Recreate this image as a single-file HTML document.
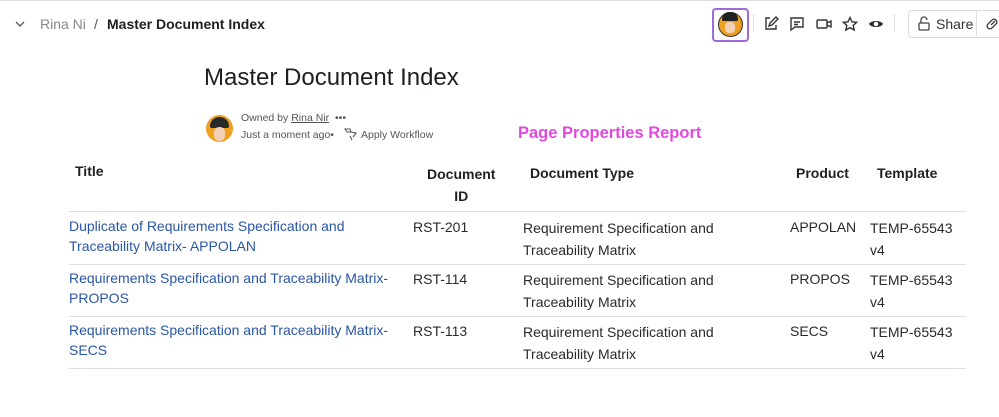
<!DOCTYPE html>
<html><head><meta charset="utf-8"><style>
body{margin:0;width:999px;height:417px;background:#fff;position:relative;overflow:hidden;font-family:"Liberation Sans",sans-serif;color:#292a2e}
.a{position:absolute;white-space:nowrap}
.t{font-size:14px;line-height:20px}
.b{font-weight:bold;color:#1d1f22}
.l{color:#2a56a6}
.hr{position:absolute;left:69px;width:897px;height:1px;background:#dcdfe4}
.ic{position:absolute;top:16px}
</style></head><body>
<div style="position:absolute;left:0;top:0;width:999px;height:1px;background:#ddd"></div>
<svg class="a" style="left:14px;top:19px" width="12" height="10"><path d="M2 3l4 4 4-4" stroke="#555" stroke-width="1.3" fill="none"/></svg>
<div class="a t" style="left:40px;top:14px;color:#888">Rina Ni</div>
<div class="a t" style="left:94px;top:14px;color:#555">/</div>
<div class="a t b" style="left:107px;top:14px;font-size:14px">Master Document Index</div>

<div class="a" style="left:712px;top:8px;width:33px;height:30px;border:2px solid #9f6bdb;border-radius:4px"></div>
<div class="a" style="left:718px;top:12px;width:23px;height:23px;border-radius:50%;background:#f0a020;border:1px solid #333"></div>
<div class="a" style="left:722px;top:12px;width:16px;height:9px;background:#222;border-radius:8px 8px 2px 2px"></div>
<div class="a" style="left:725px;top:22px;width:10px;height:11px;background:#f3d1b5;border-radius:4px"></div>
<div class="a" style="left:753px;top:14px;width:1px;height:18px;background:#ddd"></div>
<svg class="ic" style="left:763px" width="16" height="16" fill="none" stroke="#333" stroke-width="1.4"><path d="M7 2H3v11h10V9"/><path d="M6 10l1-3 6-6 2 2-6 6z"/></svg>
<svg class="ic" style="left:789px" width="16" height="16" fill="none" stroke="#333" stroke-width="1.4"><path d="M2 2h12v9H6l-4 3z"/><path d="M5 6h6M5 8.5h4"/></svg>
<svg class="ic" style="left:816px" width="16" height="16" fill="none" stroke="#333" stroke-width="1.4"><rect x="1" y="4" width="10" height="8" rx="1"/><path d="M11 7l4-2v6l-4-2"/></svg>
<svg class="ic" style="left:842px" width="16" height="16" fill="none" stroke="#333" stroke-width="1.4"><path d="M8 1.5l2 4.3 4.6.5-3.4 3.1 1 4.6L8 11.7 3.8 14l1-4.6L1.4 6.3 6 5.8z"/></svg>
<svg class="ic" style="left:868px" width="16" height="16"><path d="M1 8c2-4 12-4 14 0-2 4-12 4-14 0z" fill="#333"/><circle cx="8" cy="8" r="2.2" fill="#fff"/></svg>
<div class="a" style="left:894px;top:14px;width:1px;height:18px;background:#ddd"></div>
<div class="a" style="left:908px;top:10px;width:100px;height:26px;border:1px solid #ddd;border-radius:4px"></div>
<svg class="ic" style="left:917px" width="14" height="16" fill="none" stroke="#444" stroke-width="1.3"><rect x="2" y="7" width="10" height="7" rx="1"/><path d="M4 7V4a3 3 0 0 1 6 0"/></svg>
<div class="a t" style="left:936px;top:14px;color:#333">Share</div>
<div class="a" style="left:976px;top:11px;width:1px;height:25px;background:#ddd"></div>
<svg class="ic" style="left:984px" width="16" height="16" fill="none" stroke="#444" stroke-width="1.4"><path d="M7 9l4-4M6 6L4 8a2.5 2.5 0 0 0 4 4l2-2M10 10l2-2a2.5 2.5 0 0 0-4-4L6 6"/></svg>

<div class="a" style="left:204px;top:62px;font-size:24px;line-height:32px;color:#1d1f22">Master Document Index</div>
<div class="a" style="left:206px;top:115px;width:27px;height:27px;border-radius:50%;background:#f0a020;overflow:hidden">
<div style="position:absolute;left:4px;top:2px;width:19px;height:11px;background:#2a2a2a;border-radius:10px 10px 2px 2px"></div>
<div style="position:absolute;left:8px;top:12px;width:11px;height:14px;background:#f3d1b5;border-radius:5px"></div></div>
<div class="a" style="left:241px;top:111px;font-size:10.5px;line-height:14px;color:#555">Owned by <span style="text-decoration:underline">Rina Nir</span> &nbsp;•••</div>
<div class="a" style="left:241px;top:128px;font-size:10.5px;line-height:14px;color:#555">Just a moment ago•</div>
<svg class="a" style="left:344px;top:127px" width="14" height="14" fill="none" stroke="#555" stroke-width="1.1"><path d="M1 2h5l1 3H3zM7 5l5 1-3 4M6 9l2 4"/></svg>
<div class="a" style="left:361px;top:128px;font-size:10.5px;line-height:14px;color:#555">Apply Workflow</div>
<div class="a" style="left:518px;top:123px;font-size:16.5px;line-height:20px;font-weight:bold;color:#e048e0">Page Properties Report</div>

<div class="a t b" style="left:75px;top:161px">Title</div>
<div class="a t b" style="left:427px;top:163px;text-align:center;line-height:22px">Document<br>ID</div>
<div class="a t b" style="left:530px;top:163px">Document Type</div>
<div class="a t b" style="left:796px;top:163px">Product</div>
<div class="a t b" style="left:877px;top:163px">Template</div>

<div class="hr" style="top:211px"></div>
<div class="hr" style="top:264px"></div>
<div class="hr" style="top:316px"></div>
<div class="hr" style="top:368px"></div>

<div class="a t l" style="left:69px;top:216px;line-height:20px">Duplicate of Requirements Specification and<br>Traceability Matrix- APPOLAN</div>
<div class="a t l" style="left:69px;top:268px;line-height:20px">Requirements Specification and Traceability Matrix-<br>PROPOS</div>
<div class="a t l" style="left:69px;top:320px;line-height:20px">Requirements Specification and Traceability Matrix-<br>SECS</div>

<div class="a t" style="left:413px;top:217px">RST-201</div>
<div class="a t" style="left:413px;top:269px">RST-114</div>
<div class="a t" style="left:413px;top:321px">RST-113</div>

<div class="a t" style="left:523px;top:217px;line-height:22px">Requirement Specification and<br>Traceability Matrix</div>
<div class="a t" style="left:523px;top:269px;line-height:22px">Requirement Specification and<br>Traceability Matrix</div>
<div class="a t" style="left:523px;top:321px;line-height:22px">Requirement Specification and<br>Traceability Matrix</div>

<div class="a t" style="left:790px;top:217px">APPOLAN</div>
<div class="a t" style="left:790px;top:269px">PROPOS</div>
<div class="a t" style="left:790px;top:321px">SECS</div>

<div class="a t" style="left:870px;top:217px;line-height:22px">TEMP-65543<br>v4</div>
<div class="a t" style="left:870px;top:269px;line-height:22px">TEMP-65543<br>v4</div>
<div class="a t" style="left:870px;top:321px;line-height:22px">TEMP-65543<br>v4</div>
</body></html>
